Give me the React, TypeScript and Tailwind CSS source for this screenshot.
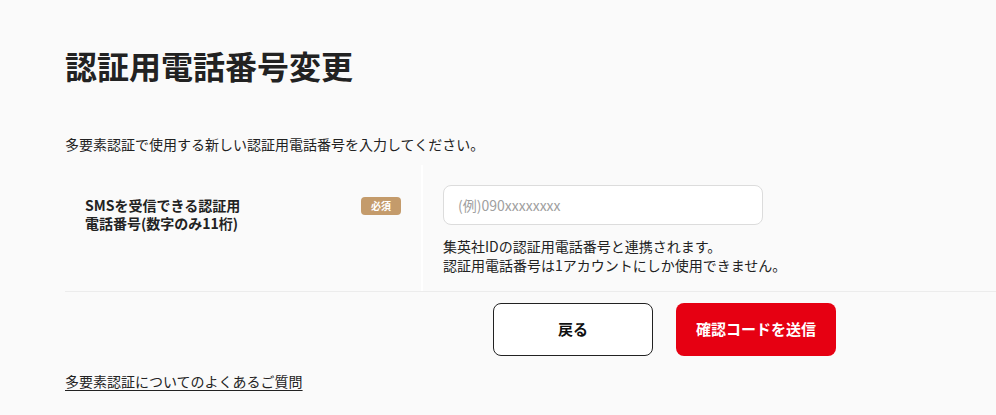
export default function App() {
  return (
    <div className="min-h-screen bg-[#fafafa] text-[#222] font-['Noto_Sans_CJK_JP','Noto_Sans',sans-serif]">
      <div className="pl-[65px] pt-[41px]">
        <h1 className="text-[32px] font-bold leading-[48px]">認証用電話番号変更</h1>
        <p className="mt-[45px] text-[14px] leading-[21px]">多要素認証で使用する新しい認証用電話番号を入力してください。</p>
        <div className="mt-[10px] flex border-b border-[#ececec]">
          <div className="w-[358px] shrink-0 border-r-2 border-white px-5 pt-[31px] flex justify-between items-start">
            <div className="text-[14px] font-bold leading-[18px]">
              SMSを受信できる認証用
              <br />
              電話番号(数字のみ11桁)
            </div>
            <span className="mt-[1px] rounded-[4px] bg-[#c49b6b] px-[10px] h-[18px] flex items-center text-[10px] font-bold text-white leading-none">必須</span>
          </div>
          <div className="pl-5 pt-5 pb-[16px]">
            <input
              className="w-[320px] h-[40px] rounded-[8px] border border-[#dcdcdc] bg-white px-[14px] text-[14px] outline-none placeholder:text-[#a0a0a0]"
              placeholder="(例)090xxxxxxxx"
            />
            <p className="mt-[12px] text-[14px] leading-[19px] text-[#222]">
              集英社IDの認証用電話番号と連携されます。
              <br />
              認証用電話番号は1アカウントにしか使用できません。
            </p>
          </div>
        </div>
        <div className="mt-[11px] flex gap-[23px] pl-[428px]">
          <button className="w-[160px] h-[53px] rounded-[8px] border border-[#222] bg-white text-[15px] font-bold text-[#111]">戻る</button>
          <button className="w-[160px] h-[53px] rounded-[8px] bg-[#e60012] text-[15px] font-bold text-white">確認コードを送信</button>
        </div>
        <a href="#" className="mt-[15px] inline-block text-[14px] leading-[21px] text-[#222] underline underline-offset-[3px]">多要素認証についてのよくあるご質問</a>
      </div>
    </div>
  );
}
